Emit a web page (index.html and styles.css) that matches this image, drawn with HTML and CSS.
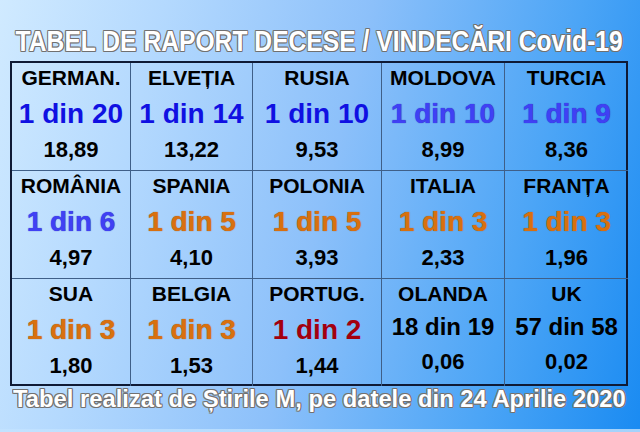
FILE: index.html
```html
<!DOCTYPE html>
<html lang="ro">
<head>
<meta charset="utf-8">
<title>Tabel de raport decese / vindecări Covid-19</title>
<link rel="stylesheet" href="styles.css">
</head>
<body>
<div class="page">
  <h1 class="title"><span class="title-text">TABEL DE RAPORT DECESE / VINDECĂRI Covid-19</span></h1>
  <div class="table">
    <div class="cell"><div class="name">GERMAN.</div><div class="big blue">1 din 20</div><div class="small">18,89</div></div>
    <div class="cell"><div class="name">ELVEȚIA</div><div class="big blue">1 din 14</div><div class="small">13,22</div></div>
    <div class="cell"><div class="name">RUSIA</div><div class="big blue">1 din 10</div><div class="small">9,53</div></div>
    <div class="cell"><div class="name">MOLDOVA</div><div class="big light">1 din 10</div><div class="small">8,99</div></div>
    <div class="cell"><div class="name">TURCIA</div><div class="big light">1 din 9</div><div class="small">8,36</div></div>

    <div class="cell"><div class="name">ROMÂNIA</div><div class="big light">1 din 6</div><div class="small">4,97</div></div>
    <div class="cell"><div class="name">SPANIA</div><div class="big orange">1 din 5</div><div class="small">4,10</div></div>
    <div class="cell"><div class="name">POLONIA</div><div class="big orange">1 din 5</div><div class="small">3,93</div></div>
    <div class="cell"><div class="name">ITALIA</div><div class="big orange">1 din 3</div><div class="small">2,33</div></div>
    <div class="cell"><div class="name">FRANȚA</div><div class="big orange">1 din 3</div><div class="small">1,96</div></div>

    <div class="cell"><div class="name">SUA</div><div class="big orange">1 din 3</div><div class="small">1,80</div></div>
    <div class="cell"><div class="name">BELGIA</div><div class="big orange">1 din 3</div><div class="small">1,53</div></div>
    <div class="cell"><div class="name">PORTUG.</div><div class="big red">1 din 2</div><div class="small">1,44</div></div>
    <div class="cell cell-black"><div class="name">OLANDA</div><div class="big black">18 din 19</div><div class="small">0,06</div></div>
    <div class="cell cell-black"><div class="name">UK</div><div class="big black">57 din 58</div><div class="small">0,02</div></div>
  </div>
  <p class="footer"><span class="footer-text">Tabel realizat de Știrile M, pe datele din 24 Aprilie 2020</span></p>
</div>
<div class="strip"></div>
</body>
</html>
```

FILE: styles.css
```css
html, body {
  margin: 0;
  padding: 0;
}
body {
  width: 640px;
  height: 432px;
  overflow: hidden;
  font-family: "Liberation Sans", Arial, sans-serif;
  background: #b3d9fc;
}
.page {
  width: 640px;
  height: 429px;
  box-sizing: border-box;
  padding: 0 12px 0 10px;
  background: linear-gradient(104deg, #d0eaff 0%, #b4d9fe 22%, #8cc0fa 50%, #4ca5f6 78%, #1a8bf2 100%);
}
.strip {
  height: 3px;
  background: linear-gradient(90deg, #c2e2ff, #a4d2fb);
}
.title {
  margin: 0;
  height: 61px;
  box-sizing: border-box;
  padding-top: 24px;
  display: flex;
  justify-content: center;
  font-size: 29px;
  line-height: 34px;
  font-weight: bold;
  white-space: nowrap;
}
.title-text, .footer-text {
  display: block;
  flex: none;
  color: #fff;
  text-shadow:
    1px 0 #707070, -1px 0 #707070, 0 1px #707070, 0 -1px #707070,
    1px 1px #808080, -1px 1px #808080, 1px -1px #808080, -1px -1px #808080;
}
.title-text {
  transform: scaleX(0.85);
  transform-origin: center;
}
.table {
  display: grid;
  grid-template-columns: 119px 122px 129px 123px 123px;
  grid-template-rows: 108px 108px 107px;
  border: 2px solid #0f1a35;
  width: 618px;
  box-sizing: border-box;
  height: 325px;
}
.cell {
  display: flex;
  flex-direction: column;
  align-items: center;
  border-right: 1px solid #3f5f88;
  border-bottom: 1px solid #3f5f88;
  font-weight: bold;
  white-space: nowrap;
}
.cell:nth-child(5n) {
  border-right: none;
}
.cell:nth-child(n+11) {
  border-bottom: none;
}
.name {
  font-size: 21px;
  line-height: 30px;
  color: #000;
}
.big {
  font-size: 28px;
  line-height: 42px;
}
.small {
  font-size: 22px;
  line-height: 30px;
  color: #000;
}
.blue {
  color: #1010e2;
}
.light {
  color: #4040f4;
  text-shadow: 0 0 1px #2020a8;
}
.orange {
  color: #d8700f;
  text-shadow: 0 0 1px #9a4a08;
}
.red {
  color: #a3000e;
}
.cell-black .big {
  font-size: 24px;
  line-height: 36px;
  color: #000;
}
.cell-black .small {
  line-height: 34px;
}
.footer {
  margin: 0;
  display: flex;
  justify-content: center;
  font-size: 24px;
  line-height: 26px;
  font-weight: bold;
  white-space: nowrap;
}
.footer-text {
  transform: scaleX(0.99);
  transform-origin: center;
}
```
